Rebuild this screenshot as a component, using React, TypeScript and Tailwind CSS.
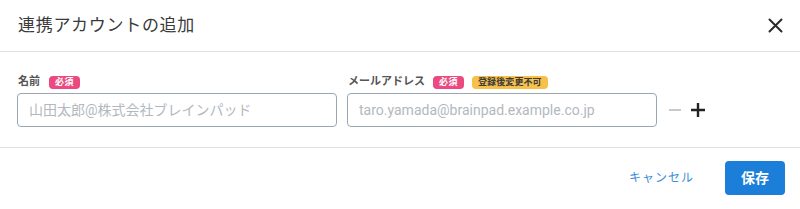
import React from "react"

const font = { fontFamily: 'Roboto, "Noto Sans CJK JP", sans-serif' }

const Badge = ({ children, tone }: { children: React.ReactNode; tone: "pink" | "yellow" }) => (
  <span
    className={`inline-flex h-[13px] items-center rounded-[4px] px-[6px] text-[9px] font-bold leading-none ${
      tone === "pink" ? "bg-[#ea4a7f] text-white tracking-[0.5px]" : "bg-[#f6c04a] text-[#3a3a3a] tracking-[0.1px]"
    }`}
  >
    {children}
  </span>
)

export default function App() {
  return (
    <div className="w-[800px] h-[209px] bg-white text-[#333]" style={font}>
      <div className="flex h-[52px] items-center justify-between border-b border-[#e2e2e2] pl-[18px] pr-[15px]">
        <h1 className="text-[17px] font-normal tracking-[0.7px] text-[#3a3a3a]">連携アカウントの追加</h1>
        <button className="flex h-[20px] w-[20px] items-center justify-center">
          <svg width="15" height="15" viewBox="0 0 15 15">
            <path d="M1.5 1.5L13.5 13.5M13.5 1.5L1.5 13.5" stroke="#2b2b2b" strokeWidth="2" strokeLinecap="round" />
          </svg>
        </button>
      </div>

      <div className="flex items-end h-[96px] border-b border-[#e2e2e2] pl-[17px] pb-[20px]">
        <div className="flex flex-col w-[320px]">
          <div className="flex items-center gap-[9px] mb-[4px] h-[13px]">
            <span className="pl-[1px] text-[11px] font-bold text-[#555]">名前</span>
            <Badge tone="pink">必須</Badge>
          </div>
          <input
            className="h-[34px] w-full rounded-[4px] border border-[#9aa6b4] px-[11px] text-[14px] placeholder:text-[#b3b8be] outline-none"
            placeholder="山田太郎@株式会社ブレインパッド"
          />
        </div>
        <div className="flex flex-col w-[310px] ml-[10px]">
          <div className="flex items-center gap-[8px] mb-[4px] h-[13px]">
            <span className="pl-[1px] text-[11px] font-bold text-[#555]">メールアドレス</span>
            <Badge tone="pink">必須</Badge>
            <Badge tone="yellow">登録後変更不可</Badge>
          </div>
          <input
            className="h-[34px] w-full rounded-[4px] border border-[#9aa6b4] px-[11px] text-[14px] placeholder:text-[#b3b8be] outline-none"
            placeholder="taro.yamada@brainpad.example.co.jp"
          />
        </div>
        <div className="flex h-[34px] items-center gap-[10px] ml-[12px]">
          <svg width="12" height="12" viewBox="0 0 12 12">
            <path d="M0 6H12" stroke="#c9c9c9" strokeWidth="2" />
          </svg>
          <svg width="14" height="14" viewBox="0 0 14 14">
            <path d="M0 7H14M7 0V14" stroke="#222" strokeWidth="2.4" />
          </svg>
        </div>
      </div>

      <div className="flex h-[60px] items-center justify-end gap-[31px] pr-[15px]">
        <button className="text-[12px] tracking-[1px] text-[#3a8ddb]">キャンセル</button>
        <button className="h-[34px] w-[60px] rounded-[4px] bg-[#1b7fd9] text-[14px] font-bold text-white">保存</button>
      </div>
    </div>
  )
}
